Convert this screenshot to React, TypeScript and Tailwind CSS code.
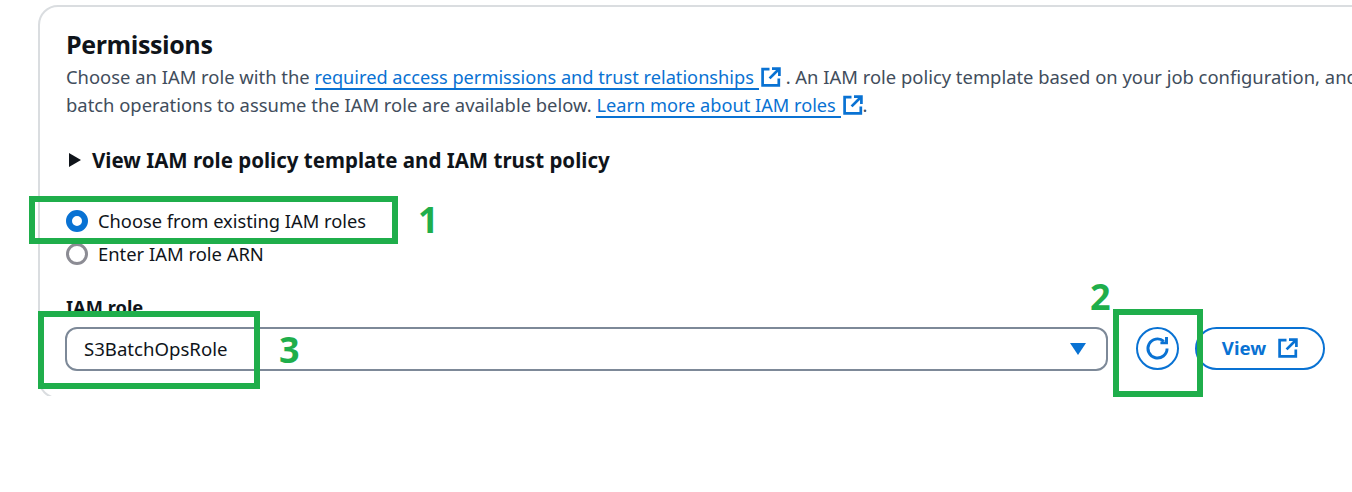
const Ext = ({ className }: { className: string }) => (
  <svg viewBox="0 0 20 20" fill="none" stroke="#0972d3" strokeWidth="2.7" className={className}>
    <path d="M8.5 2.2H1.6v16.2h16.2v-7" />
    <path d="M11 1.6h7.4V9" />
    <path d="M18 2 8.6 11.4" />
  </svg>
);

const Box = ({ className }: { className: string }) => (
  <div className={`absolute border-[6px] border-[#1fae4b] ${className}`} />
);

const Num = ({ className, children }: { className: string; children: string }) => (
  <span className={`absolute text-[36px] leading-none font-bold text-[#1fae4b] ${className}`}>{children}</span>
);

export default function App() {
  return (
    <div className="relative w-[1352px] h-[492px] overflow-hidden bg-white font-['Noto_Sans',sans-serif]">
      <div className="h-[396px] overflow-hidden pt-[5px] pl-[38px]">
        <div className="w-[1400px] h-[394px] rounded-[20px] border-2 border-[#dadde0] pl-[26px] pt-[19px]">
          <h2 className="text-[25px] leading-[36px] font-bold text-[#0f141a] font-['Open_Sans',sans-serif] tracking-[-0.4px]">Permissions</h2>
          <div className="text-[18.4px] leading-[28px] text-[#414d5c] whitespace-nowrap mt-[1px]">
            <p className="flex items-center h-[28px]">
              <span>Choose an IAM role with the&nbsp;</span>
              <a className="text-[18.2px] text-[#0972d3] border-b-2 border-[#0972d3] leading-[27px] h-[26px]">required access permissions and trust relationships&nbsp;</a>
              <Ext className="w-[20px] h-[20px] ml-[2px] mr-[5px]" />
              <span>. An IAM role policy template based on your job configuration, and</span>
            </p>
            <p className="flex items-center h-[28px]">
              <span>batch operations to assume the IAM role are available below.&nbsp;</span>
              <a className="text-[18.2px] text-[#0972d3] border-b-2 border-[#0972d3] leading-[27px] h-[26px]">Learn more about IAM roles&nbsp;</a>
              <Ext className="w-[20px] h-[20px] ml-[2px]" />
              <span>.</span>
            </p>
          </div>
          <div className="flex items-center mt-[27px] h-[28px]">
            <svg viewBox="0 0 12 14" className="w-[12px] h-[14px] ml-[3px] mr-[11px]" fill="#0f141a"><path d="M0 0l12 7-12 7z" /></svg>
            <span className="text-[20.5px] font-bold text-[#0f141a] whitespace-nowrap">View IAM role policy template and IAM trust policy</span>
          </div>
          <div className="flex items-center mt-[31px] h-[32px]">
            <span className="w-[22px] h-[22px] rounded-full border-[6px] border-[#0972d3] bg-white" />
            <span className="ml-[10px] text-[18.3px] text-[#0f141a] whitespace-nowrap">Choose from existing IAM roles</span>
          </div>
          <div className="flex items-center h-[32px] mt-[1px]">
            <span className="w-[22px] h-[22px] rounded-full border-[3px] border-[#8c8c94] bg-white" />
            <span className="ml-[10px] text-[18.4px] text-[#0f141a] whitespace-nowrap">Enter IAM role ARN</span>
          </div>
          <div className="text-[18.25px] font-bold leading-[26px] text-[#0f141a] mt-[24px] h-[18px]">IAM role</div>
          <div className="flex items-center mt-[15px] -ml-px">
            <div className="w-[1043px] h-[44px] rounded-[12px] border-2 border-[#7d8998] flex items-center justify-between pl-[17px] pr-[20px]">
              <span className="text-[18.6px] text-[#0f141a]">S3BatchOpsRole</span>
              <svg viewBox="0 0 16 12" className="w-[16px] h-[12px]" fill="#0972d3"><path d="M0 0h16L8 12z" /></svg>
            </div>
            <button className="ml-[28px] -mt-[2px] w-[43px] h-[43px] rounded-full border-2 border-[#0972d3] flex items-center justify-center">
              <svg viewBox="0 0 24 24" className="w-[27px] h-[27px]" fill="none" stroke="#0972d3" strokeWidth="2.6">
                <path d="M20.5 12A8.5 8.5 0 1 1 17.6 5.6" />
                <path d="M20 1.8V7h-5.4" />
              </svg>
            </button>
            <button className="ml-[16px] -mt-[2px] w-[130px] h-[43px] rounded-full border-2 border-[#0972d3] flex items-center justify-center gap-[12px] text-[18.6px] font-bold text-[#0972d3]">
              View
              <Ext className="w-[20px] h-[20px]" />
            </button>
          </div>
        </div>
      </div>
      <Box className="left-[29px] top-[196px] w-[369px] h-[48px]" />
      <Box className="left-[38px] top-[311px] w-[222px] h-[78px]" />
      <Box className="left-[1113px] top-[309px] w-[90px] h-[88px]" />
      <Num className="left-[418px] top-[202px]">1</Num>
      <Num className="left-[1090px] top-[279px]">2</Num>
      <Num className="left-[279px] top-[332px]">3</Num>
    </div>
  );
}
